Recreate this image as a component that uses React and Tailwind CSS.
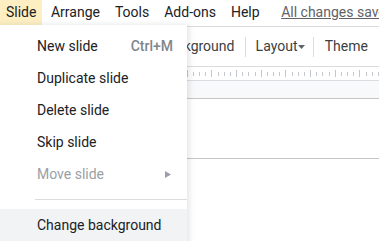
import React from 'react';

const menus = ['Slide', 'Arrange', 'Tools', 'Add-ons', 'Help'];

const items = [
  { label: 'New slide', shortcut: 'Ctrl+M' },
  { label: 'Duplicate slide' },
  { label: 'Delete slide' },
  { label: 'Skip slide' },
  { label: 'Move slide', disabled: true, submenu: true },
];

const Ruler = () => {
  const ticks = [];
  for (let i = 0; i < 70; i++) {
    const x = Math.round(162 + i * 6.17) + 0.5;
    const big = i % 4 === 0;
    ticks.push(
      <line key={i} x1={x} x2={x} y1={big ? 3 : 5} y2={big ? 10 : 9} stroke="#c4c7cb" strokeWidth="1" />
    );
  }
  return (
    <svg width="379" height="13" className="block">
      {ticks}
    </svg>
  );
};

export default function App() {
  return (
    <div className="relative w-[379px] h-[241px] overflow-hidden bg-white font-['Roboto',sans-serif] text-[14px] text-[#202124]">
      {/* menu bar */}
      <div className="flex h-[27px] border-b border-[#dadce0] items-start whitespace-nowrap">
        {menus.map((m, i) => (
          <div
            key={m}
            className={`flex items-center h-[25px] ${i === 0 ? 'bg-[#feefc3] pl-[6px] pr-[6px] mr-[1px]' : 'px-[7.5px]'}`}
          >
            {m}
          </div>
        ))}
        <div className="flex items-center pl-[14px] h-[25px] text-[#5f6368] underline">All changes saved in Drive</div>
      </div>

      {/* toolbar */}
      <div className="flex items-center h-[40px] border-b border-[#dadce0] pl-[160px] text-[#3c4043] whitespace-nowrap">
        <span>Background</span>
        <div className="w-px h-[20px] bg-[#dadce0] ml-[11px] mr-[10px]" />
        <span className="flex items-center">
          Layout
          <svg width="7" height="4" viewBox="0 0 7 4" className="ml-[1px] mt-[1px]">
            <path d="M0 0h7L3.5 4z" fill="#5f6368" />
          </svg>
        </span>
        <div className="w-px h-[20px] bg-[#dadce0] ml-[8px] mr-[11px]" />
        <span>Theme</span>
        <div className="w-px h-[20px] bg-[#dadce0] ml-[11px]" />
      </div>

      {/* ruler */}
      <div className="h-[14px] border-b border-[#dadce0]">
        <Ruler />
      </div>
      <div className="h-[18px] bg-[#f8f9fa] border-b border-[#c6c6c6]" />
      <div className="h-[60px] border-b border-[#c6c6c6]" />

      {/* dropdown */}
      <div className="absolute left-0 top-[25px] w-[187px] h-[230px] bg-white shadow-[0_2px_6px_2px_rgba(60,64,67,0.15)] pt-[5px]">
        {items.map((it) => (
          <div
            key={it.label}
            className={`flex items-center justify-between h-[32px] pl-[37px] pr-[14px] ${it.disabled ? 'text-[#9aa0a6]' : ''}`}
          >
            <span>{it.label}</span>
            {it.shortcut && <span className="text-[#80868b] font-medium">{it.shortcut}</span>}
            {it.submenu && (
              <svg width="6" height="7" viewBox="0 0 6 7" className="mr-[2px]">
                <path d="M0 0l6 3.5L0 7z" fill="#9aa0a6" />
              </svg>
            )}
          </div>
        ))}
        <div className="ml-[35px] h-px bg-[#dadce0] mt-[9px] mb-[9px]" />
        <div className="flex items-center h-[32px] pl-[37px] bg-[#f1f3f4]">Change background</div>
      </div>
    </div>
  );
}
